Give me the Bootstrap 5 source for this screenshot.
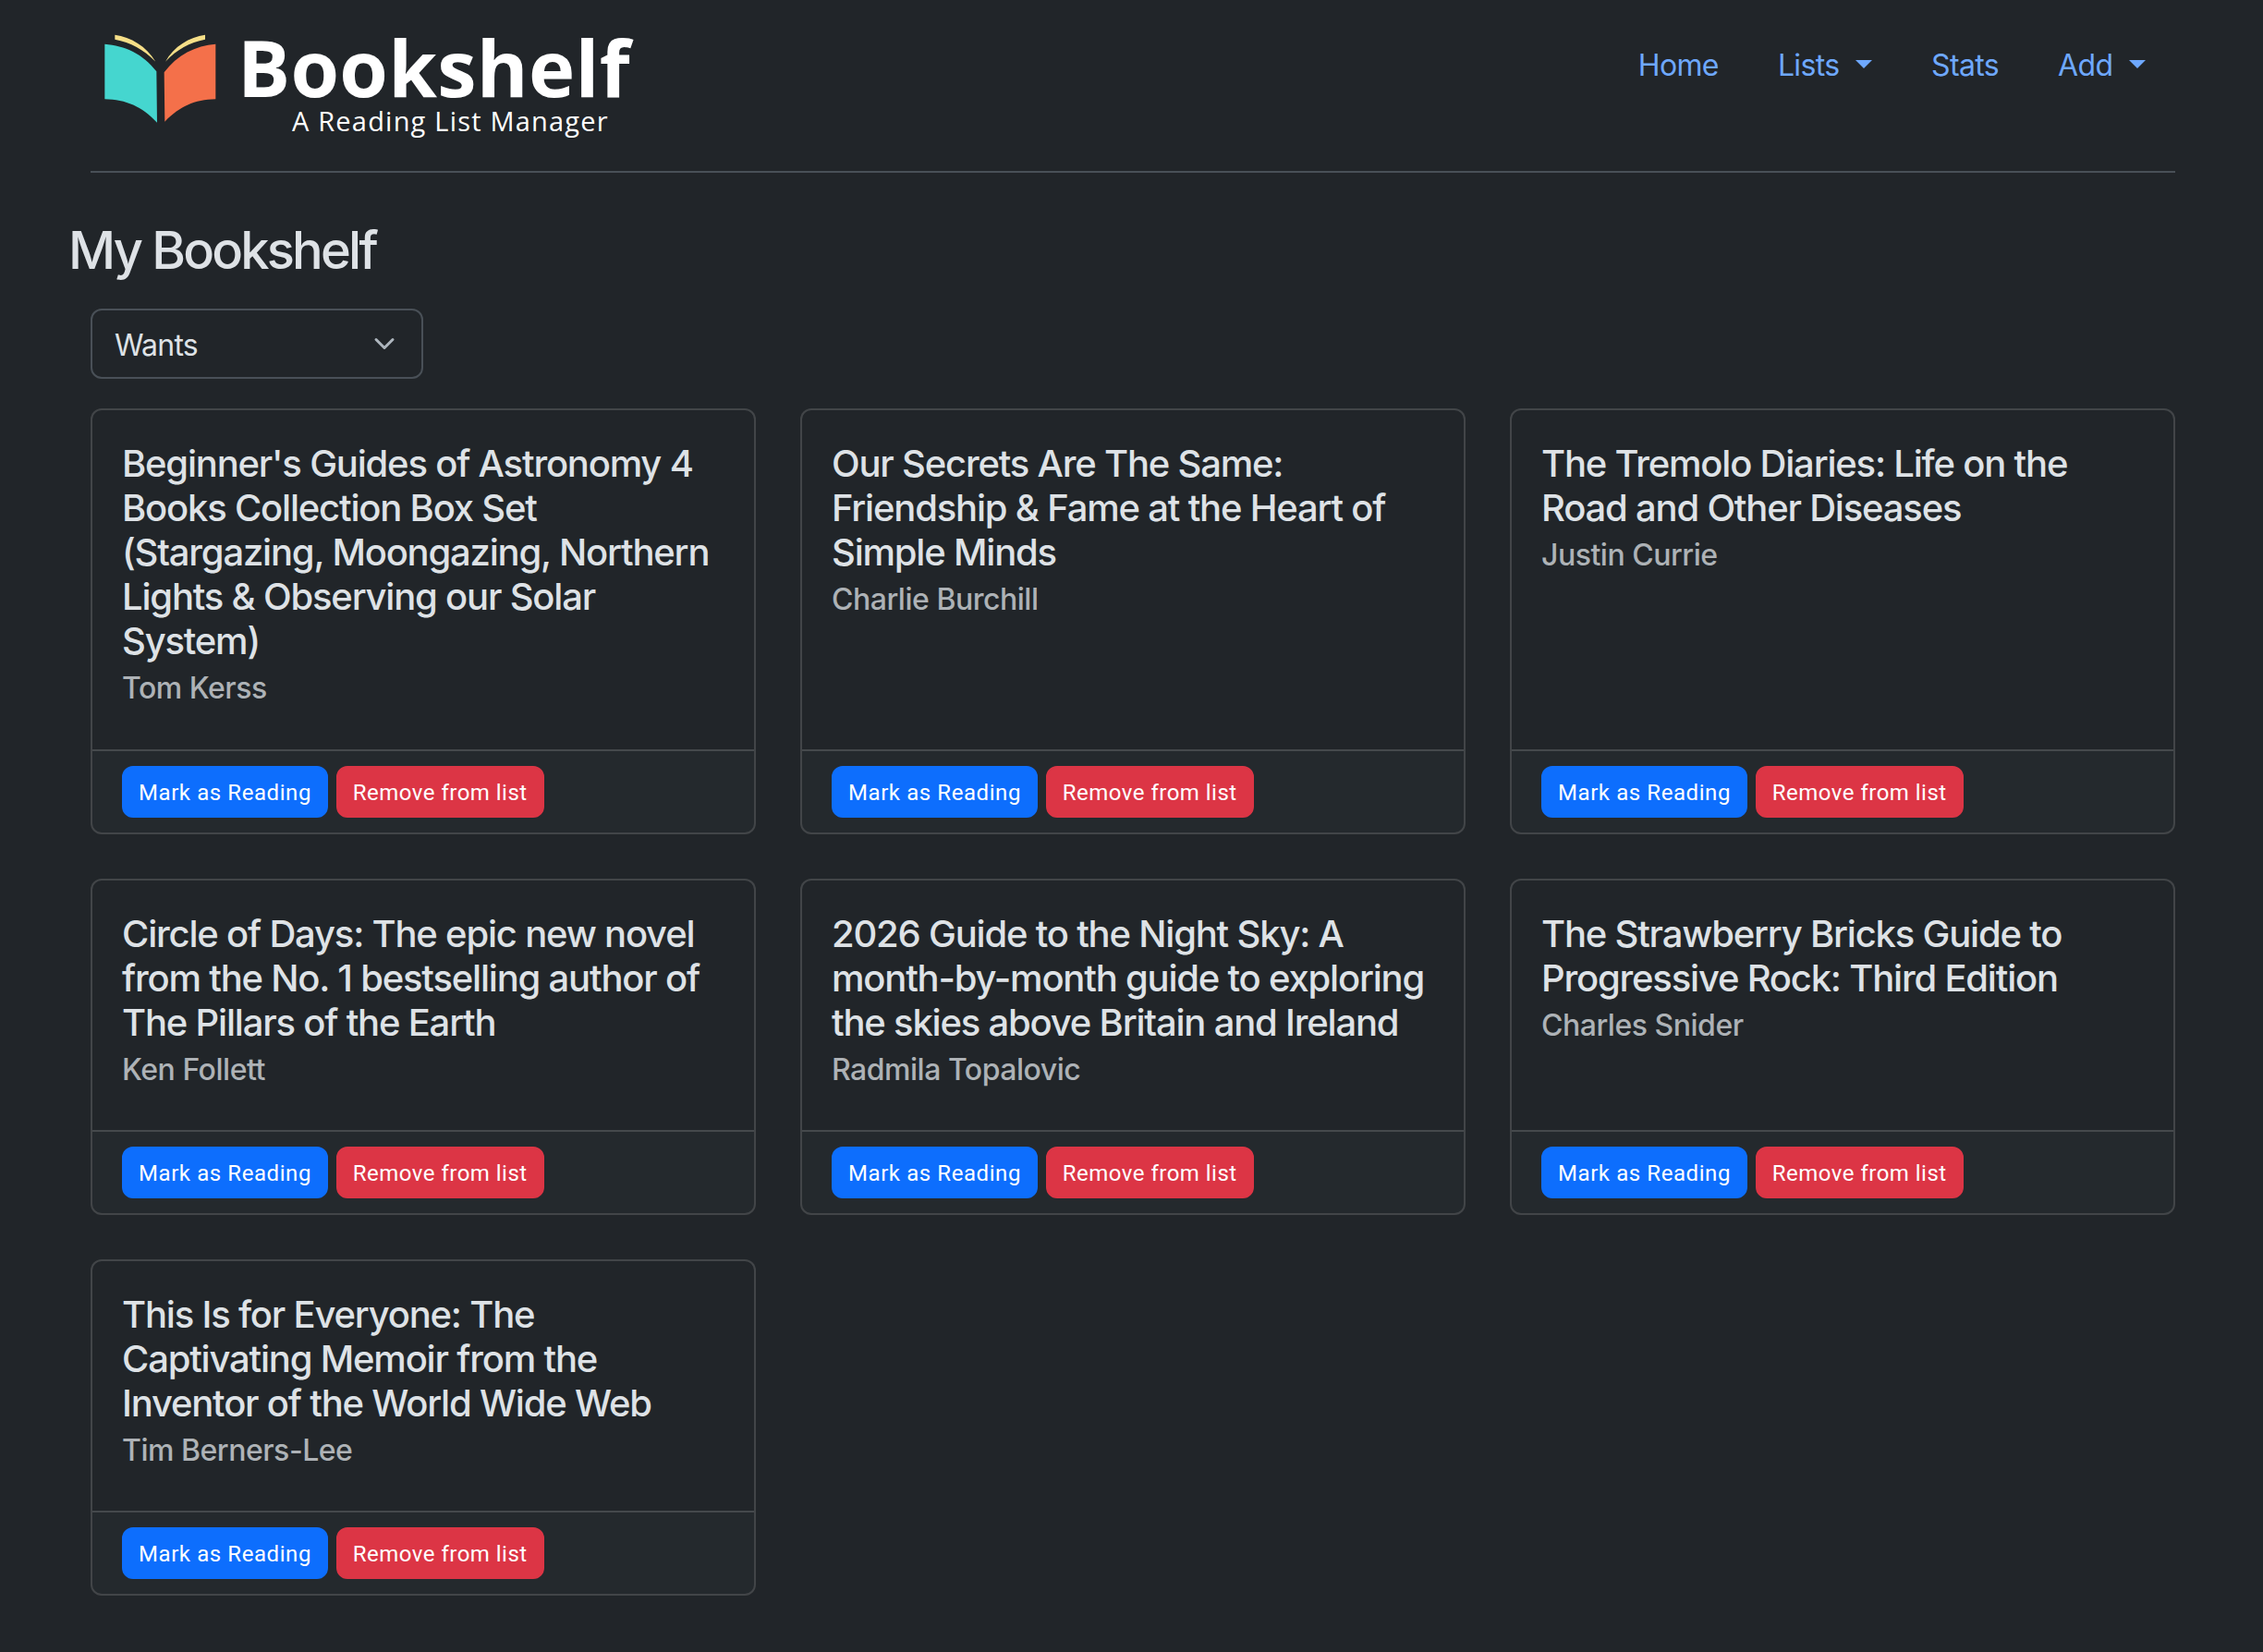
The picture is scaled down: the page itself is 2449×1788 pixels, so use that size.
<!DOCTYPE html>
<html lang="en" data-bs-theme="dark">
<head>
<meta charset="utf-8">
<title>Bookshelf</title>
<link href="https://cdn.jsdelivr.net/npm/bootstrap@5.3.0/dist/css/bootstrap.min.css" rel="stylesheet">
<style>
html[data-bs-theme=dark]{font-size:32px;--bs-border-width:2px;--bs-body-font-family:"Inter",sans-serif;--bs-body-bg:#212529;--bs-body-color:#dee2e6;--bs-secondary-color:rgba(222,226,230,.75)}
body{font-family:"Inter",sans-serif;letter-spacing:-.02em}
.page-wrap{padding:0 71px 62px 74px}
.top-head{margin:0 24px;height:187px;border-bottom:2px solid #495057}
.brand-svg{width:150px;height:120px;flex:none;margin-top:20px;margin-left:2px;margin-right:7px}
.brand-txt{font-family:"Open Sans",sans-serif;color:#fff;letter-spacing:0;text-decoration:none;padding-top:32px}
.brand-main{font-size:85px;line-height:81px;font-weight:700;display:block;letter-spacing:.3px}
.brand-sub{font-size:29px;line-height:36px;display:block;padding-left:59px;letter-spacing:1.2px}
.top-nav{padding-top:30px}
.top-nav .nav-link{color:#6ea8fe;padding-top:17px;padding-bottom:15px}
.top-nav .dropdown-toggle::after{margin-left:.55em}
.page-title{font-weight:500;font-size:56px;letter-spacing:-.05em;margin-top:51px;margin-bottom:29px;color:#dee2e6}
.shelf-pick{width:360px;margin:0 24px 32px;background-size:32px 24px;background-position:right 24px center;padding-top:14px;padding-bottom:10px;padding-right:72px;letter-spacing:-.025em}
.btn-sm{--bs-btn-font-size:24px;--bs-btn-border-radius:12px;--bs-btn-padding-y:9px;letter-spacing:.024em;font-family:"Roboto",sans-serif;padding-bottom:7px}
.btn-danger.btn-sm{letter-spacing:.02em;margin-left:.5px}
.card-body{padding-top:34px;padding-bottom:30px}
.card-title{font-weight:500;letter-spacing:-.03em}
.card-subtitle{font-weight:500;letter-spacing:-.015em}
</style>
</head>
<body>
<div class="page-wrap">
  <header class="top-head d-flex justify-content-between align-items-start">
    <a class="d-flex align-items-start text-decoration-none" href="#">
      <svg class="brand-svg" viewBox="0 0 450 360" aria-hidden="true">
        <path fill="#45d6cf" d="M40 83C105 88 165 115 208 172L210 338C160 285 110 264 40 262Z"/>
        <path fill="#f4704a" d="M400 83C335 88 275 118 233 175L235 335C285 285 330 264 400 262Z"/>
        <path fill="#f6df88" d="M73 53C125 60 175 90 205 140C165 100 125 78 73 68Z"/>
        <path fill="#f6df88" d="M366 53C315 60 265 90 237 140C275 100 315 78 366 68Z"/>
      </svg>
      <span class="brand-txt"><span class="brand-main">Bookshelf</span><span class="brand-sub">A Reading List Manager</span></span>
    </a>
    <ul class="nav top-nav">
      <li class="nav-item"><a class="nav-link" href="#">Home</a></li>
      <li class="nav-item"><a class="nav-link dropdown-toggle" href="#">Lists</a></li>
      <li class="nav-item"><a class="nav-link" href="#">Stats</a></li>
      <li class="nav-item"><a class="nav-link dropdown-toggle" href="#">Add</a></li>
    </ul>
  </header>
  <h3 class="page-title">My Bookshelf</h3>
  <select class="form-select shelf-pick"><option>Wants</option></select>
  <div class="row row-cols-3 g-4 mx-0">
    <div class="col"><div class="card h-100"><div class="card-body"><h5 class="card-title">Beginner's Guides of Astronomy 4 Books Collection Box Set (Stargazing, Moongazing, Northern Lights &amp; Observing our Solar System)</h5><h6 class="card-subtitle mb-2 text-body-secondary">Tom Kerss</h6></div><div class="card-footer"><a href="#" class="btn btn-primary btn-sm">Mark as Reading</a> <a href="#" class="btn btn-danger btn-sm">Remove from list</a></div></div></div>
    <div class="col"><div class="card h-100"><div class="card-body"><h5 class="card-title">Our Secrets Are The Same: Friendship &amp; Fame at the Heart of Simple Minds</h5><h6 class="card-subtitle mb-2 text-body-secondary">Charlie Burchill</h6></div><div class="card-footer"><a href="#" class="btn btn-primary btn-sm">Mark as Reading</a> <a href="#" class="btn btn-danger btn-sm">Remove from list</a></div></div></div>
    <div class="col"><div class="card h-100"><div class="card-body"><h5 class="card-title">The Tremolo Diaries: Life on the Road and Other Diseases</h5><h6 class="card-subtitle mb-2 text-body-secondary">Justin Currie</h6></div><div class="card-footer"><a href="#" class="btn btn-primary btn-sm">Mark as Reading</a> <a href="#" class="btn btn-danger btn-sm">Remove from list</a></div></div></div>
    <div class="col"><div class="card h-100"><div class="card-body"><h5 class="card-title">Circle of Days: The epic new novel from the No. 1 bestselling author of The Pillars of the Earth</h5><h6 class="card-subtitle mb-2 text-body-secondary">Ken Follett</h6></div><div class="card-footer"><a href="#" class="btn btn-primary btn-sm">Mark as Reading</a> <a href="#" class="btn btn-danger btn-sm">Remove from list</a></div></div></div>
    <div class="col"><div class="card h-100"><div class="card-body"><h5 class="card-title">2026 Guide to the Night Sky: A month-by-month guide to exploring the skies above Britain and Ireland</h5><h6 class="card-subtitle mb-2 text-body-secondary">Radmila Topalovic</h6></div><div class="card-footer"><a href="#" class="btn btn-primary btn-sm">Mark as Reading</a> <a href="#" class="btn btn-danger btn-sm">Remove from list</a></div></div></div>
    <div class="col"><div class="card h-100"><div class="card-body"><h5 class="card-title">The Strawberry Bricks Guide to Progressive Rock: Third Edition</h5><h6 class="card-subtitle mb-2 text-body-secondary">Charles Snider</h6></div><div class="card-footer"><a href="#" class="btn btn-primary btn-sm">Mark as Reading</a> <a href="#" class="btn btn-danger btn-sm">Remove from list</a></div></div></div>
    <div class="col"><div class="card h-100"><div class="card-body"><h5 class="card-title">This Is for Everyone: The Captivating Memoir from the Inventor of the World Wide Web</h5><h6 class="card-subtitle mb-2 text-body-secondary">Tim Berners-Lee</h6></div><div class="card-footer"><a href="#" class="btn btn-primary btn-sm">Mark as Reading</a> <a href="#" class="btn btn-danger btn-sm">Remove from list</a></div></div></div>
  </div>
</div>
<script src="https://cdn.jsdelivr.net/npm/bootstrap@5.3.0/dist/js/bootstrap.bundle.min.js"></script>
</body>
</html>
